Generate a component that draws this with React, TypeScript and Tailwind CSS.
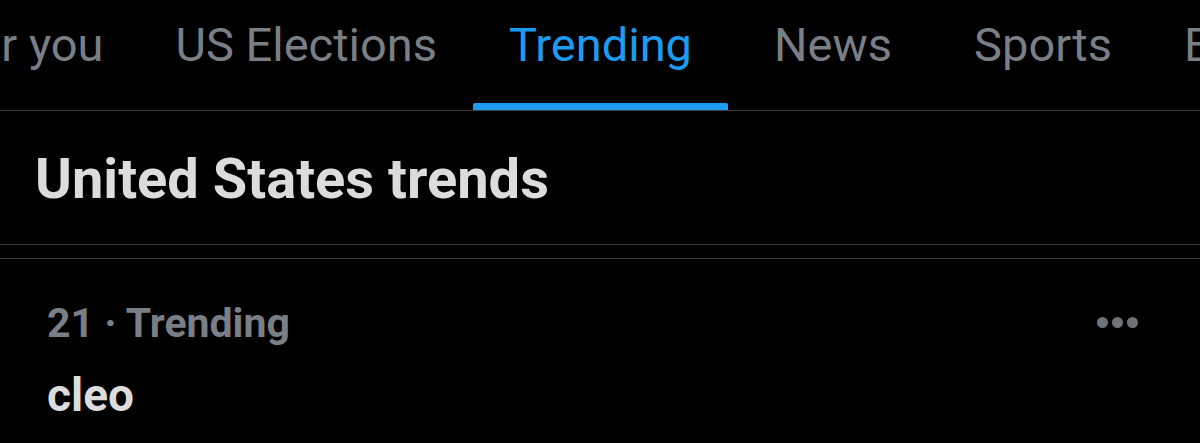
import { useState } from 'react';

const tabs = ['For you', 'US Elections', 'Trending', 'News', 'Sports', 'Entertainment'];

const App = () => {
  const [active, setActive] = useState('Trending');

  return (
    <div className="w-[1200px] h-[443px] overflow-hidden bg-black" style={{ fontFamily: 'Roboto, "Noto Sans", sans-serif' }}>
      {/* Tabs */}
      <div className="h-[111px] border-b border-[#3a3a3a] overflow-hidden">
        <div className="flex h-full ml-[-87px] whitespace-nowrap">
          {tabs.map((tab) => (
            <button
              key={tab}
              onClick={() => setActive(tab)}
              className="relative flex flex-col items-center h-full min-w-[210px] px-[36px] shrink-0"
            >
              <span
                className={`pt-[17px] text-[47px] leading-[56px] ${tab === active ? 'text-[#1d9bf0]' : 'text-[#7a7f85]'}`}
              >
                {tab}
              </span>
              {tab === active && (
                <span className="absolute left-0 right-0 bottom-[-1px] h-[8px] rounded-t-[2px] bg-[#1d9bf0]" />
              )}
            </button>
          ))}
        </div>
      </div>

      {/* Heading */}
      <div className="h-[134px] border-b border-[#3a3a3a] px-[35px] pt-[36px]">
        <h2 className="text-[56px] leading-[64px] font-bold text-[#dcdcdc]">United States trends</h2>
      </div>
      <div className="h-[13px]" />

      {/* Trend row */}
      <div className="border-t border-[#3a3a3a] pl-[47px] pr-[62px] pt-[40px] flex items-start justify-between">
        <div>
          <p className="text-[41px] leading-[48px] font-bold text-[#7a7f85]">21 · Trending</p>
          <p className="mt-[20px] text-[46px] leading-[56px] font-bold text-[#dcdcdc]">cleo</p>
        </div>
        <div className="flex gap-[4px] mt-[18px]">
          <span className="w-[11px] h-[11px] rounded-full bg-[#6e7378]" />
          <span className="w-[11px] h-[11px] rounded-full bg-[#6e7378]" />
          <span className="w-[11px] h-[11px] rounded-full bg-[#6e7378]" />
        </div>
      </div>
    </div>
  );
};

export default App;
